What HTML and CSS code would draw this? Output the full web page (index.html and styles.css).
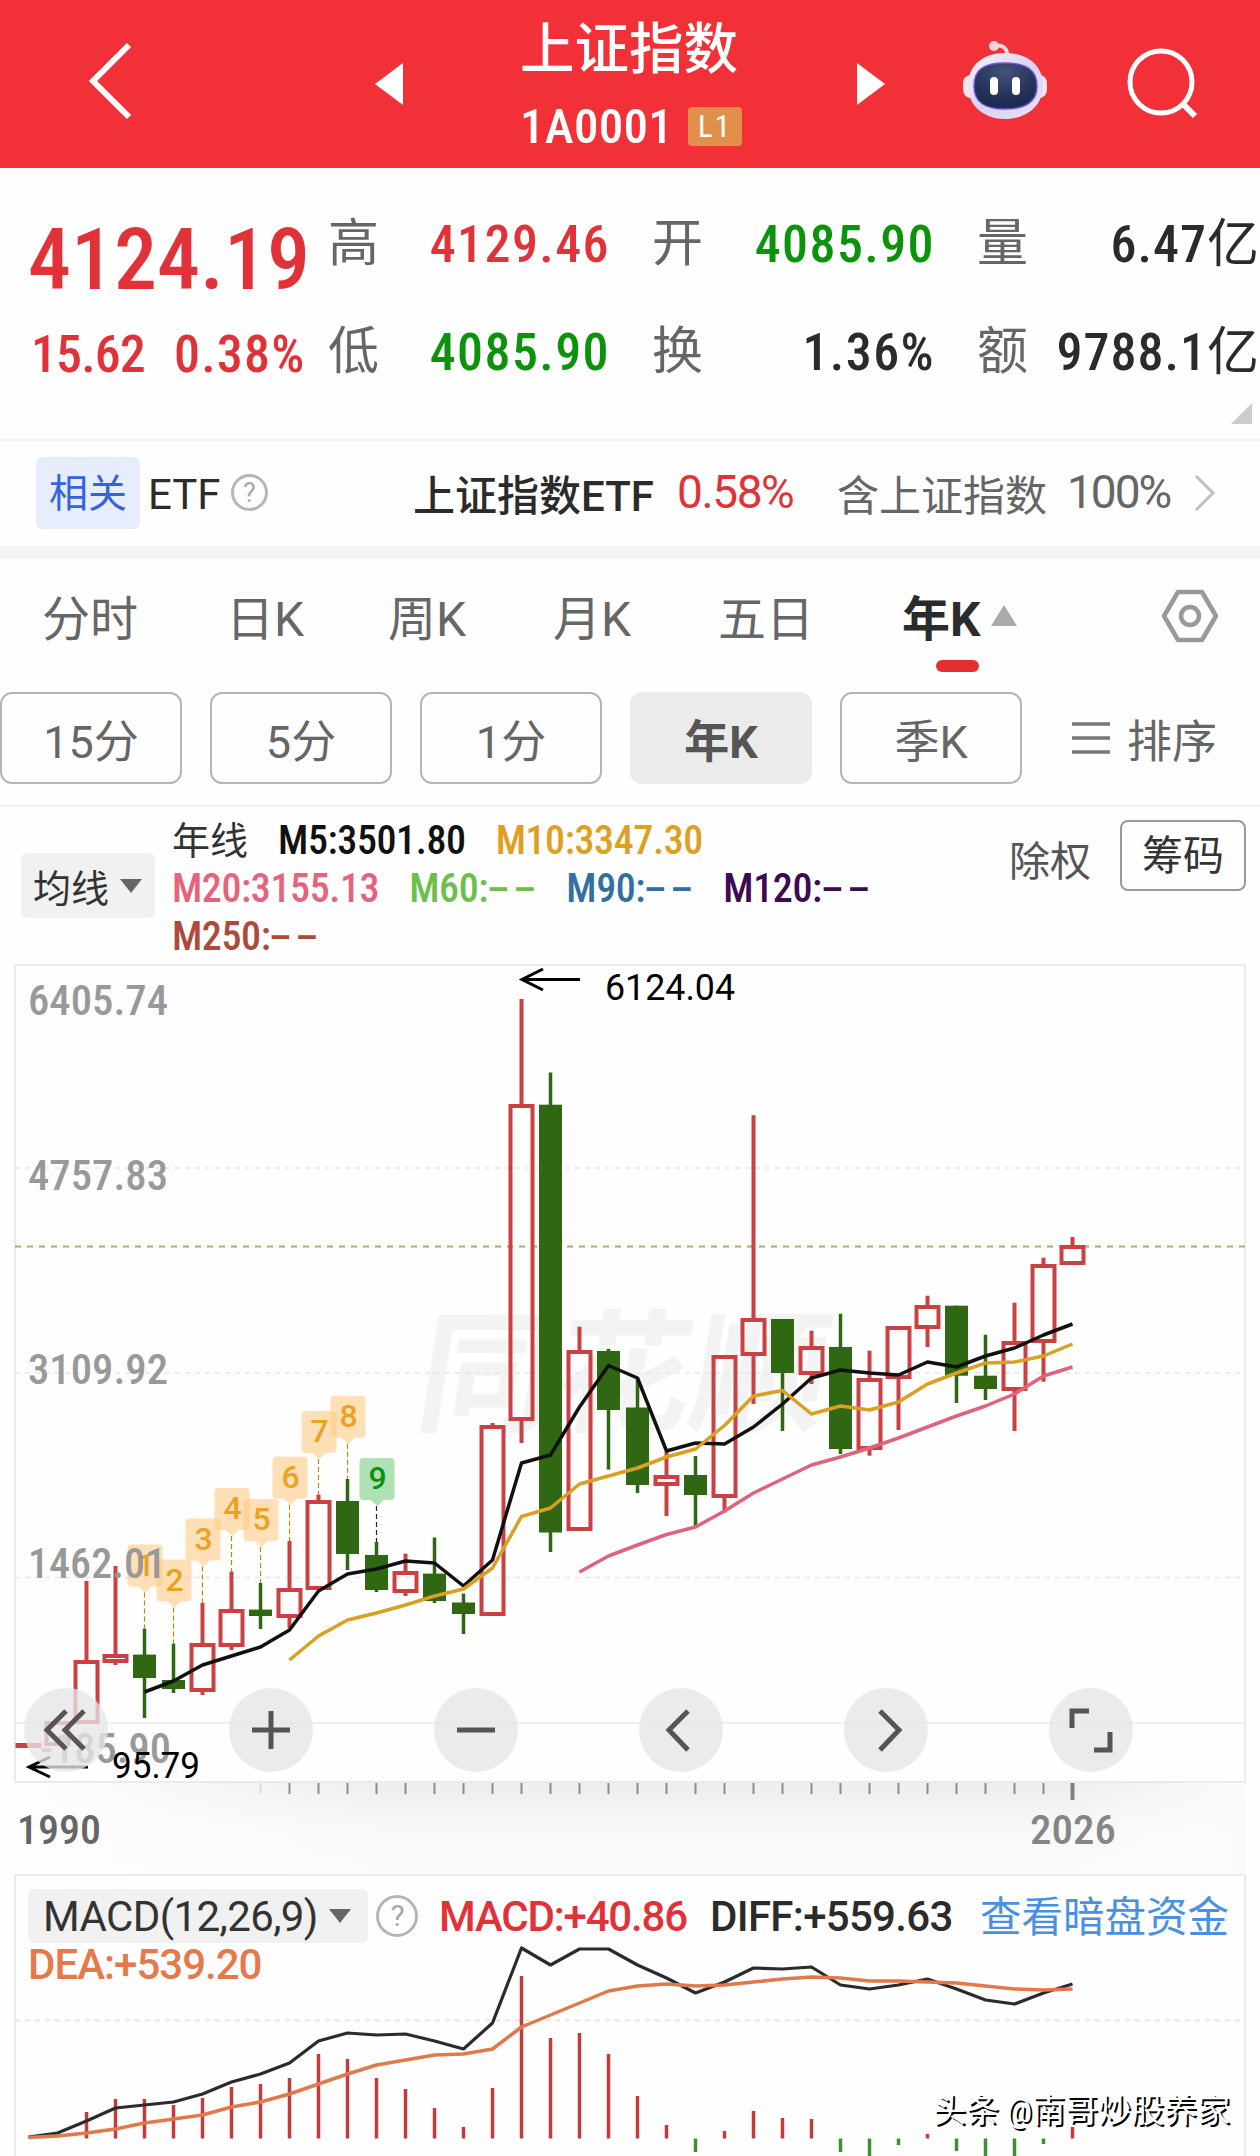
FILE: index.html
```html
<!DOCTYPE html>
<html lang="zh-CN">
<head>
    <meta charset="UTF-8">
    <meta name="viewport" content="width=device-width, initial-scale=1.0">
    <title>上证指数</title>
    <link rel="stylesheet" href="styles.css">
</head>
<body>
    <header class="header">
        <svg class="back" width="46" height="80" viewBox="0 0 46 80"><path d="M42 5 6 41 42 77" fill="none" stroke="#fff" stroke-width="6"/></svg>
        <svg class="prev" width="28" height="42" viewBox="0 0 28 42"><path d="M28 0v42L0 21z" fill="#fff"/></svg>
        <div class="title">
            <h1>上证指数</h1>
            <div class="code"><span>1A0001</span><span class="level">L1</span></div>
        </div>
        <svg class="next" width="28" height="42" viewBox="0 0 28 42"><path d="M0 0v42L28 21z" fill="#fff"/></svg>
        <svg class="robot" width="86" height="80" viewBox="0 0 86 80">
            <defs>
                <linearGradient id="shell" x1="0" y1="0" x2="1" y2="1">
                    <stop offset="0" stop-color="#fdf3f8"/>
                    <stop offset=".5" stop-color="#d9d3f6"/>
                    <stop offset="1" stop-color="#e9e2fa"/>
                </linearGradient>
                <radialGradient id="face" cx=".5" cy=".2" r=".8">
                    <stop offset="0" stop-color="#46537c"/>
                    <stop offset=".6" stop-color="#26335a"/>
                    <stop offset="1" stop-color="#1b2850"/>
                </radialGradient>
            </defs>
            <path d="M32 6c8-2 14 2 13 10" fill="none" stroke="#fbd3dc" stroke-width="4"/>
            <circle cx="32" cy="6" r="5" fill="#fbd3dc"/>
            <rect x="1" y="35" width="84" height="23" rx="8" fill="#fbe3ea"/>
            <path d="M43 13c22 0 38 12 38 33 0 20-17 33-38 33S6 66 6 46c0-21 15-33 37-33z" fill="url(#shell)"/>
            <path d="M43 23c20 0 32 6 32 23 0 16-11 23-32 23S12 62 12 46c0-17 11-23 31-23z" fill="url(#face)" stroke="#6a55d8" stroke-width="1.5"/>
            <rect x="28" y="37" width="8" height="18" rx="4" fill="#fff"/>
            <rect x="50" y="37" width="8" height="18" rx="4" fill="#fff"/>
        </svg>
        <svg class="search" width="72" height="72" viewBox="0 0 72 72"><g fill="none" stroke="#fff" stroke-width="5"><circle cx="34" cy="35" r="31"/><path d="m56 57 12 12" stroke-width="6"/></g></svg>
    </header>

    <section class="quote">
        <div class="last red">4124.19</div>
        <div class="change red"><span>15.62</span><span class="percent">0.38%</span></div>
        <dl class="stats">
            <div><dt>高</dt><dd class="red">4129.46</dd></div>
            <div><dt>开</dt><dd class="green">4085.90</dd></div>
            <div><dt>量</dt><dd>6.47<i>亿</i></dd></div>
            <div><dt>低</dt><dd class="green">4085.90</dd></div>
            <div><dt>换</dt><dd>1.36%</dd></div>
            <div><dt>额</dt><dd>9788.1<i>亿</i></dd></div>
        </dl>
        <span class="corner"></span>
    </section>

    <section class="etf">
        <span class="tag">相关</span>
        <span class="etf-label">ETF</span>
        <span class="help">?</span>
        <span class="etf-name">上证指数ETF</span>
        <span class="etf-rate red">0.58%</span>
        <span class="etf-hold">含上证指数</span>
        <span class="etf-part">100%</span>
        <svg class="etf-arrow" width="22" height="38" viewBox="0 0 22 38"><path d="m2 2 17 17L2 36" fill="none" stroke="#bfbfbf" stroke-width="3"/></svg>
    </section>

    <nav class="tabs">
        <a>分时</a>
        <a>日K</a>
        <a>周K</a>
        <a>月K</a>
        <a>五日</a>
        <a class="active">年K<span class="up"></span></a>
        <svg class="setting" width="58" height="54" viewBox="0 0 58 54"><g fill="none" stroke="#999" stroke-width="4.5" stroke-linejoin="round"><path d="M17 3h24l14 24-14 24H17L3 27z"/><circle cx="29" cy="27" r="9"/></g></svg>
    </nav>

    <div class="periods">
        <button>15分</button>
        <button>5分</button>
        <button>1分</button>
        <button class="active">年K</button>
        <button>季K</button>
        <span class="sort"><svg width="38" height="34" viewBox="0 0 38 34"><path d="M0 3h38M0 17h38M0 31h38" stroke="#777" stroke-width="3.5"/></svg>排序</span>
    </div>

    <section class="ma">
        <div class="picker">均线<span class="down"></span></div>
        <div class="ma-list">
            <div><span class="ma-name">年线</span><span class="m5">M5:3501.80</span><span class="m10">M10:3347.30</span></div>
            <div><span class="m20">M20:3155.13</span><span class="m60">M60:<b>--</b></span><span class="m90">M90:<b>--</b></span><span class="m120">M120:<b>--</b></span></div>
            <div><span class="m250">M250:<b>--</b></span></div>
        </div>
        <span class="rights">除权</span>
        <button class="chips">筹码</button>
    </section>

    <section class="kchart">
        <svg id="kline" width="1260" height="910" viewBox="0 964 1260 910"></svg>
        <div class="tools">
            <button><svg viewBox="0 0 84 84"><path d="M42 23 23 42l19 19M60 23 41 42l19 19"/></svg></button>
            <button><svg viewBox="0 0 84 84"><path d="M23 42h38M42 23v38"/></svg></button>
            <button><svg viewBox="0 0 84 84"><path d="M23 42h38"/></svg></button>
            <button><svg viewBox="0 0 84 84"><path d="M49 23 30 42l19 20"/></svg></button>
            <button><svg viewBox="0 0 84 84"><path d="m36 23 19 19-19 20"/></svg></button>
            <button><svg viewBox="0 0 84 84"><path d="M23 40V23h17M45 62h16V44"/></svg></button>
        </div>
    </section>

    <section class="macd">
        <svg id="macd" width="1260" height="282" viewBox="0 1874 1260 282"></svg>
        <div class="macd-head">
            <div class="picker">MACD(12,26,9)<span class="down"></span></div>
            <span class="help">?</span>
            <span class="macd-value red">MACD:+40.86</span>
            <span class="diff">DIFF:+559.63</span>
            <a class="funds">查看暗盘资金</a>
        </div>
        <div class="dea">DEA:+539.20</div>
        <div class="author">头条 @南哥炒股养家</div>
    </section>

    <script src="chart.js"></script>
</body>
</html>
```

FILE: styles.css
```css
* {
    box-sizing: border-box;
}

body {
    margin: 0;
    width: 1260px;
    height: 2156px;
    overflow: hidden;
    background: #fefefe;
    color: #2b2b2b;
    font-family: Roboto, "Noto Sans CJK SC", sans-serif;
    font-stretch: 75%;
}

button {
    font-family: inherit;
    padding: 0;
    background: none;
}

svg {
    display: block;
    flex: none;
}

.red {
    color: #e03238;
}

.green {
    color: #0c930c;
}

/* Header */
.header {
    display: flex;
    height: 168px;
    background: #f13037;
    color: #fff;
}

.back {
    margin: 40px 0 0 87px;
}

.prev {
    margin: 63px 0 0 242px;
}

.title {
    width: 454px;
    padding: 16px 0 0 117px;
}

.title h1 {
    margin: 0;
    font-size: 54.5px;
    font-weight: 500;
    line-height: 66px;
}

.code {
    display: flex;
    align-items: center;
    margin-top: 24px;
    font-size: 49px;
    font-weight: 500;
    line-height: 42px;
    letter-spacing: .3px;
}

.level {
    width: 54px;
    height: 39px;
    margin: -2px 0 0 15px;
    border-radius: 4px;
    background: #e1904b;
    font-size: 31px;
    font-weight: 400;
    line-height: 40px;
    text-align: center;
    letter-spacing: 2px;
}

.next {
    margin-top: 63px;
}

.robot {
    margin: 40px 0 0 77px;
}

.search {
    margin: 47px 0 0 79px;
}

/* Quote */
.quote {
    position: relative;
    display: grid;
    grid-template-columns: 328px 1fr;
    grid-template-rows: 148px 124px;
    height: 273px;
    border-bottom: 2px solid #f1f1f1;
}

.last {
    padding: 49px 0 0 28px;
    font-size: 86px;
    font-weight: 500;
    line-height: 86px;
    letter-spacing: 0;
}

.change {
    grid-row: 2;
    display: flex;
    padding: 11px 0 0 31px;
    font-size: 52px;
    font-weight: 500;
    line-height: 56px;
    letter-spacing: -.9px;
}

.change span {
    width: 143px;
}

.change .percent {
    letter-spacing: 1.2px;
}

.stats {
    grid-column: 2;
    grid-row: 1 / 3;
    display: grid;
    grid-template-columns: 279px 325px 278px;
    grid-template-rows: 108px 108px;
    margin: 38px 0 0;
}

.stats div {
    display: flex;
    justify-content: space-between;
    height: 76px;
    line-height: 76px;
}

.stats div:nth-child(3n+2) {
    padding: 0 0 0 45px;
}

.stats div:nth-child(3n) {
    padding-left: 45px;
    width: 325px;
}

.stats dt {
    font-size: 51px;
    color: #666;
}

.stats dd {
    margin: 1px -3px 0 0;
    font-size: 52px;
    font-weight: 500;
    letter-spacing: 1.4px;
}

.stats div:nth-child(3n) dd {
    margin-right: 0;
    letter-spacing: 1px;
}

.stats i {
    font-style: normal;
    font-weight: 400;
    letter-spacing: -2px;
}

.corner {
    position: absolute;
    right: 8px;
    top: 235px;
    border-left: 21px solid transparent;
    border-bottom: 21px solid #ccc;
}

/* ETF */
.etf {
    display: flex;
    align-items: center;
    height: 118px;
    padding: 0 0 13px 36px;
    border-bottom: 13px solid #f4f4f4;
    font-size: 42px;
    font-stretch: 100%;
    white-space: nowrap;
}

.tag {
    width: 104px;
    height: 72px;
    margin-top: 12px;
    border-radius: 6px;
    background: #e6edfd;
    color: #3563dd;
    font-size: 39px;
    line-height: 75px;
    text-align: center;
}

.etf-label {
    width: 82px;
    margin: 14px 0 0 8px;
}

.help {
    width: 37px;
    height: 37px;
    border: 3px solid #b5b5b5;
    border-radius: 50%;
    color: #aaa;
    font-size: 27px;
    line-height: 32px;
    text-align: center;
}

.etf .help {
    margin: 11px 0 0 1px;
}

.etf-name {
    width: 244px;
    margin: 11px 0 0 145px;
    font-weight: 500;
}

.etf-rate {
    width: 121px;
    margin: 10px 0 0 20px;
    font-size: 46px;
    letter-spacing: -1.4px;
}

.etf-hold {
    width: 211px;
    margin: 11px 0 0 39px;
    color: #666;
}

.etf-part {
    width: 105px;
    margin: 10px 0 0 19px;
    color: #666;
    font-size: 46px;
    letter-spacing: -2px;
}

.etf-arrow {
    margin: 12px 0 0 22px;
}

/* Tabs */
.tabs {
    position: relative;
    display: grid;
    grid-template-columns: 184px 162px 165px 165px 184px 258px 60px;
    height: 133px;
    padding: 23px 0 0 42px;
    color: #666;
    font-size: 48px;
    font-stretch: 100%;
    line-height: 76px;
}

.tabs .active {
    position: relative;
    color: #2b2b2b;
    font-weight: 700;
}

.tabs .active::after {
    content: "";
    position: absolute;
    left: 34px;
    top: 78px;
    width: 43px;
    height: 12px;
    border-radius: 6px;
    background: #e23030;
}

.up {
    display: inline-block;
    margin: 0 0 10px 10px;
    border: 13px solid transparent;
    border-top: 0;
    border-bottom: 21px solid #aaa;
}

.setting {
    margin: 7px 0 0 1px;
}

/* Periods */
.periods {
    display: flex;
    gap: 28px;
    height: 115px;
    border-bottom: 2px solid #f1f1f1;
}

.periods button {
    width: 182px;
    height: 92px;
    border: 2px solid #b5b5b5;
    border-radius: 12px;
    color: #666;
    font-size: 45px;
}

.periods .active {
    border: 0;
    background: #ebebeb;
    color: #555;
    font-weight: 700;
}

.sort {
    display: flex;
    align-items: center;
    gap: 17px;
    height: 92px;
    margin-left: 22px;
    color: #666;
    font-size: 45px;
}

/* Moving averages */
.ma {
    display: flex;
    height: 157px;
    padding-left: 21px;
}

.picker {
    display: flex;
    align-items: center;
    border-radius: 6px;
    background: #f1f1f1;
    color: #333;
}

.ma .picker {
    width: 134px;
    height: 65px;
    margin-top: 46px;
    padding-left: 12px;
    font-size: 38px;
}

.down {
    border: 11px solid transparent;
    border-bottom: 0;
    border-top: 14px solid #666;
    margin-left: 11px;
}

.ma-list {
    width: 854px;
    padding: 10px 0 0 17px;
    font-size: 40px;
    font-weight: 500;
    line-height: 48px;
    letter-spacing: -.4px;
}

.ma-list div {
    display: flex;
    gap: 30px;
    height: 48px;
}

/* stretched so the dashes get nearly as wide as a digit */
.ma-list b {
    display: inline-block;
    margin: 0 7px 0 10px;
    font-weight: 500;
    font-stretch: 100%;
    letter-spacing: 2px;
    transform: scaleX(1.7);
}

.ma-name {
    color: #333;
    font-size: 38px;
    font-weight: 400;
    letter-spacing: 0;
}

.m5 { color: #111; }
.m10 { color: #dfa01f; }
.m20 { color: #e5637c; }
.m60 { color: #6cc04a; }
.m90 { color: #33709f; }
.m120 { color: #3f0a50; }
.m250 { color: #ab4c3b; }

.rights {
    padding-top: 25px;
    color: #555;
    font-size: 41px;
    line-height: 60px;
}

.chips {
    width: 126px;
    height: 71px;
    margin: 13px 0 0 29px;
    border: 2px solid #999;
    border-radius: 8px;
    color: #333;
    font-size: 41px;
    line-height: 66px;
}

/* K line */
.kchart {
    position: relative;
    height: 910px;
}

.axis-label {
    fill: #999;
    font-size: 42px;
    font-weight: 500;
}

.extreme {
    fill: #000;
    font-size: 36px;
    font-stretch: 100%;
}

.year {
    fill: #666;
    font-size: 41px;
    font-weight: 500;
}

.logo-text {
    fill: #f3f3f3;
    font-size: 132px;
    font-weight: 700;
}

.nine {
    font-size: 32px;
    font-weight: 500;
    font-stretch: 100%;
    text-anchor: middle;
}

.tools {
    position: absolute;
    left: 24px;
    top: 724px;
    display: flex;
    gap: 121px;
}

.tools button {
    width: 84px;
    height: 84px;
    border: 0;
    border-radius: 50%;
    background: rgba(230, 230, 230, .78);
}

.tools path {
    fill: none;
    stroke: #555;
    stroke-width: 5;
}

/* MACD */
.macd {
    position: relative;
    height: 282px;
}

.macd-head {
    position: absolute;
    left: 28px;
    top: 15px;
    display: flex;
    align-items: center;
    height: 54px;
    font-size: 42px;
    font-weight: 500;
    font-stretch: 100%;
    letter-spacing: -1.2px;
    white-space: nowrap;
}

.macd .picker {
    width: 340px;
    height: 54px;
    padding-left: 15px;
    font-weight: 400;
    letter-spacing: -.6px;
}

.macd .help {
    width: 42px;
    height: 42px;
    margin-left: 8px;
    font-size: 30px;
    font-weight: 400;
    line-height: 36px;
}

.macd-value {
    width: 271px;
    margin-left: 21px;
}

.diff {
    width: 270px;
    letter-spacing: -.7px;
}

.funds {
    margin-top: -4px;
    color: #4a90e2;
    font-size: 41.5px;
    font-weight: 400;
    letter-spacing: 0;
}

.dea {
    position: absolute;
    left: 28px;
    top: 67px;
    color: #e5794a;
    font-size: 42px;
    font-weight: 500;
    font-stretch: 100%;
    line-height: 48px;
    letter-spacing: -1px;
}

.author {
    position: absolute;
    right: 30px;
    top: 213px;
    color: #fff;
    font-size: 33px;
    line-height: 48px;
    text-shadow: 2px 2px 0 #000;
}
```

FILE: chart.js
```javascript
const RED = '#cb4042';
const GREEN = '#2f6713';

const kline = document.getElementById('kline');
const macd = document.getElementById('macd');

// year index -> x
const px = i => 28.5 + i * 29;

// [up, body top, body bottom, wick top, wick bottom]
const candles = [
    [1, 1743, 1747, 1743, 1747],
    [1, 1721, 1746, 1721, 1746],
    [1, 1660, 1724, 1581, 1724],
    [1, 1654, 1663, 1566, 1665],
    [0, 1654.6, 1678, 1628.6, 1718],
    [0, 1680, 1689, 1643.6, 1693],
    [1, 1643, 1692, 1603, 1695],
    [1, 1609, 1647, 1571.5, 1650],
    [0, 1609.6, 1616, 1583, 1629],
    [1, 1588, 1618, 1541, 1628],
    [1, 1500, 1590, 1494.6, 1590],
    [0, 1501, 1554, 1479, 1570],
    [0, 1555, 1590, 1542, 1592],
    [1, 1571, 1593, 1553.6, 1596],
    [0, 1573.6, 1601, 1537.5, 1603],
    [0, 1602.5, 1614, 1593.6, 1634],
    [1, 1425, 1616, 1423, 1616],
    [1, 1104, 1421, 999, 1443],
    [0, 1104.7, 1532.5, 1072.5, 1552],
    [1, 1350, 1531, 1326.7, 1531],
    [0, 1351, 1410, 1348.8, 1469.6],
    [0, 1407.5, 1485, 1378, 1493],
    [1, 1475, 1486, 1452, 1516],
    [0, 1475, 1495, 1456, 1528],
    [1, 1355, 1498, 1355, 1512.5],
    [1, 1318, 1356, 1115.3, 1404],
    [0, 1319, 1373, 1319, 1431],
    [1, 1346, 1375, 1330.7, 1384],
    [0, 1347, 1449, 1313.7, 1454],
    [1, 1378, 1450, 1350.7, 1455.7],
    [1, 1326, 1379, 1326, 1430],
    [1, 1305, 1329, 1295.7, 1347],
    [0, 1305.7, 1375.7, 1305.7, 1403],
    [0, 1375.7, 1389, 1334.7, 1400],
    [1, 1341, 1391, 1302.7, 1431],
    [1, 1264, 1343, 1257.7, 1381.7],
    [1, 1245, 1265, 1237, 1265]
];

const ma5 = [1692, 1681, 1665, 1656, 1647, 1630, 1591, 1574, 1569, 1561, 1563, 1586, 1560, 1463, 1455, 1407, 1365.5, 1378, 1451, 1443, 1444, 1427, 1404, 1378, 1370, 1373, 1375, 1362, 1367, 1356, 1348, 1335, 1324];
const ma10 = [1660, 1636, 1620, 1613, 1605, 1596, 1589, 1568, 1516.5, 1508, 1484, 1476, 1468, 1457, 1449, 1425.5, 1396, 1390.5, 1414, 1406, 1410, 1402, 1384, 1373, 1363, 1362, 1356, 1344];
const ma20 = [1572, 1556, 1545, 1534.5, 1527, 1511, 1493, 1479, 1465, 1457, 1448, 1438, 1427, 1416, 1406, 1394, 1376, 1367];

// top of each sequence flag, first one stands on index 4
const flags = [1544.6, 1559.6, 1518.6, 1488, 1499, 1456.8, 1411, 1395.7, 1457.9];

const bars = [0, 0, 2112, 2099, 2099, 2105, 2098, 2087, 2084, 2078, 2054, 2059, 2078, 2089, 2108, 2127, 2088, 1976, 2038, 2033, 2054, 2096, 2125, 2152, 2131, 2111, 2118, 2119, 2152, 2157, 2145, 2134, 2151, 2162, 2160, 2144, 2127];
const diff = [2137, 2133, 2121, 2108, 2105, 2102, 2094, 2082, 2074, 2063, 2041, 2033, 2035, 2034, 2041, 2049, 2023, 1948, 1965, 1949, 1949, 1965, 1978, 1993, 1982, 1968, 1969, 1967, 1985, 1989, 1985, 1979, 1989, 2000, 2004, 1993, 1984];
const dea = [2137.5, 2136, 2133, 2129, 2123, 2119, 2115, 2107, 2102, 2094, 2084, 2074, 2065, 2060, 2055, 2054, 2049, 2027, 2015, 2003, 1991, 1986, 1984, 1986, 1985, 1982, 1979, 1977, 1978, 1981, 1981, 1982, 1983, 1986, 1989, 1990, 1989];

function line(x1, y1, x2, y2, color, width, dash) {
    return `<line x1="${x1}" y1="${y1}" x2="${x2}" y2="${y2}" stroke="${color}" stroke-width="${width}" stroke-dasharray="${dash || 'none'}"/>`;
}

function curve(values, start, color, width) {
    const points = values.map((y, i) => px(i + start) + ',' + y).join(' ');
    return `<polyline points="${points}" fill="none" stroke="${color}" stroke-width="${width}" stroke-linejoin="round"/>`;
}

function text(cls, x, y, width, str) {
    return `<text class="${cls}" x="${x}" y="${y}" textLength="${width}" lengthAdjust="spacingAndGlyphs">${str}</text>`;
}

function drawCandle(c, i) {
    const [up, top, bottom, high, low] = c;
    const x = px(i);
    if (!up) {
        return line(x, high, x, low, GREEN, 3.5) +
            `<rect x="${x - 11.5}" y="${top}" width="23" height="${bottom - top}" fill="${GREEN}"/>`;
    }
    return line(x, high, x, top + 2, RED, 4) + line(x, bottom - 2, x, low, RED, 4) +
        `<rect x="${x - 11}" y="${top + 2}" width="22" height="${Math.max(bottom - top - 4, 1)}" fill="none" stroke="${RED}" stroke-width="4"/>`;
}

function drawFlag(top, n) {
    const x = px(n + 4);
    const green = n === 8;
    const fill = green ? '#8fd494' : '#ffc77a';
    const color = green ? '#0c930c' : '#eda024';
    return line(x, top + 48, x, candles[n + 4][3], green ? '#222' : '#b08a1a', 1.2, '5 3') +
        `<path d="M${x - 13} ${top}h27q4 0 4 4v34q0 4-4 4h-7l-6 6-7-6h-7q-4 0-4-4v-34q0-4 4-4z" fill="${fill}" fill-opacity="${green ? .7 : .55}"/>` +
        `<text class="nine" x="${x + 1}" y="${top + 31}" fill="${color}">${n + 1}</text>`;
}

function drawKline() {
    let s = `<defs>
        <linearGradient id="fade" x1="0" y1="0" x2="0" y2="1"><stop offset="0" stop-color="#ededed"/><stop offset=".5" stop-color="#f8f8f8"/><stop offset="1" stop-color="#fafafa"/></linearGradient>
        <linearGradient id="side" x1="0" y1="0" x2="1" y2="0"><stop offset="0" stop-color="#fefefe"/><stop offset=".32" stop-color="#fefefe" stop-opacity="0"/><stop offset=".85" stop-color="#fefefe" stop-opacity="0"/><stop offset="1" stop-color="#fafafa"/></linearGradient>
    </defs>`;
    s += '<rect x="14" y="1782" width="1231" height="91" fill="url(#fade)"/><rect x="14" y="1782" width="1231" height="91" fill="url(#side)"/>';
    s += '<text class="logo-text" transform="translate(412 1421) skewX(-9)" textLength="410" lengthAdjust="spacingAndGlyphs">同花顺</text>';
    s += '<rect x="15" y="965" width="1230" height="817" fill="none" stroke="#ebebeb" stroke-width="2"/>';
    [1168, 1373, 1577.5].forEach(y => {
        s += line(15, y, 1245, y, '#e6e6e6', 1.5, '5 5');
    });
    s += line(15, 1723, 1245, 1723, '#efefef', 2);
    s += line(15, 1246.5, 1245, 1246.5, '#b8a66c', 2, '6 6');

    s += flags.map(drawFlag).join('');
    s += candles.map(drawCandle).join('');
    s += curve(ma5, 4, '#111', 3.5) + curve(ma10, 9, '#d9a022', 3.5) + curve(ma20, 19, '#de637c', 3.5);

    s += text('axis-label', 28, 1015, 140, '6405.74');
    s += text('axis-label', 28, 1190, 140, '4757.83');
    s += text('axis-label', 28, 1384, 140, '3109.92');
    s += text('axis-label', 28, 1578, 138, '1462.01');
    s += text('axis-label', 40, 1763, 131, '-185.90');

    s += '<path d="M580 979.5H522M543 969l-21 10.5 21 10.5M88 1767H29M50 1757l-21 10 21 10" fill="none" stroke="#000" stroke-width="3"/>';
    s += text('extreme', 605, 1000, 130, '6124.04');
    s += text('extreme', 112, 1778, 88, '95.79');

    for (let i = 8; i < 36; i++) {
        s += line(px(i), 1783, px(i), 1794, i === 8 ? '#ddd' : '#8c8c8c', 2);
    }
    s += line(px(36), 1783, px(36), 1800, '#808080', 4);
    s += text('year', 17, 1844, 84, '1990');
    s += text('year', 1030, 1844, 86, '2026').replace('<text', '<text fill-opacity=".8"');
    kline.innerHTML = s;
}

function drawMacd() {
    let s = line(14, 1875, 1246, 1875, '#ebebeb', 2) + line(15, 1874, 15, 2156, '#ebebeb', 2) + line(1245, 1874, 1245, 2156, '#ebebeb', 2);
    s += line(15, 2020.5, 1245, 2020.5, '#e6e6e6', 2, '5 5');
    bars.forEach((y, i) => {
        if (y) s += line(px(i), 2138.5, px(i), y, y > 2138 ? '#3f8f34' : '#c23c3e', 3.5);
    });
    s += curve(diff, 0, '#2b2b2b', 3.2) + curve(dea, 0, '#e07a4c', 3.5);
    macd.innerHTML = s;
}

drawKline();
drawMacd();
```
